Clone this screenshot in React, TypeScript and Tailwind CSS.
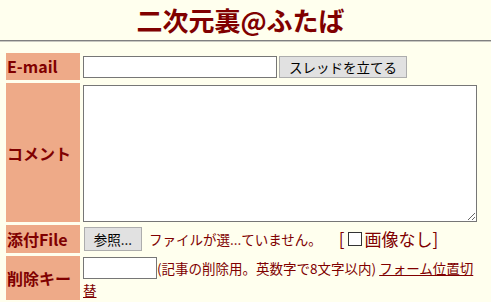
import React from "react";

const jp = { fontFamily: '"Noto Sans CJK JP", "Noto Sans", sans-serif' };

export default function App() {
  return (
    <div className="min-h-screen w-full bg-[#ffffee] text-[#800000]" style={jp}>
      <div className="pt-[5px] pr-[10px] h-[40px] text-center text-[26px] font-bold leading-[30px] text-[#800000]">
        二次元裏@ふたば
      </div>
      <div className="h-[2px] border-t border-[#808080] bg-[#c8c8c0]" />
      <div className="mt-[11px] ml-[6px] grid grid-cols-[74px_394px] gap-x-[3px] gap-y-[3px]">
        {/* E-mail */}
        <div className="h-[27px] bg-[#eeaa88] font-bold text-[16px] leading-[27px] pl-[1px]">E-mail</div>
        <div className="flex items-center gap-[2px] h-[27px]">
          <input type="text" className="w-[194px] h-[22px] border border-[#767676] bg-white" />
          <button className="h-[22px] px-[9px] bg-[#e1e1e1] border border-[#adadad] text-[13.5px] leading-[18px] text-black">
            スレッドを立てる
          </button>
        </div>
        {/* Comment */}
        <div className="h-[139px] bg-[#eeaa88] font-bold text-[16px] flex items-center pl-[1px]">コメント</div>
        <div className="h-[139px] pt-[2px]">
          <textarea className="block w-[394px] h-[137px] border border-[#767676] bg-white resize" />
        </div>
        {/* File */}
        <div className="h-[28px] bg-[#eeaa88] font-bold text-[16px] leading-[28px] pl-[1px]">添付File</div>
        <div className="flex items-center h-[28px]">
          <button className="ml-[1px] h-[24px] w-[58px] bg-[#e1e1e1] border border-[#adadad] text-[13.5px] leading-[18px] text-black">
            参照...
          </button>
          <span className="ml-[7px] text-[13.5px]">ファイルが選...ていません。</span>
          <span className="ml-[17px] text-[17px] flex items-center">
            [
            <span className="inline-block mx-[3px] w-[14px] h-[14px] border border-[#333] bg-white" />
            画像なし]
          </span>
        </div>
        {/* Delete key */}
        <div className="h-[44px] bg-[#eeaa88] font-bold text-[16px] flex items-center pl-[1px]">削除キー</div>
        <div className="h-[44px] pt-[1px] text-[13.5px] leading-[22px]">
          <input type="text" className="align-top w-[74px] h-[22px] border border-[#767676] bg-white" />
          <span>(記事の削除用。英数字で8文字以内) </span>
          <a className="underline text-[#800000]" href="#">フォーム位置切替</a>
        </div>
      </div>
    </div>
  );
}
